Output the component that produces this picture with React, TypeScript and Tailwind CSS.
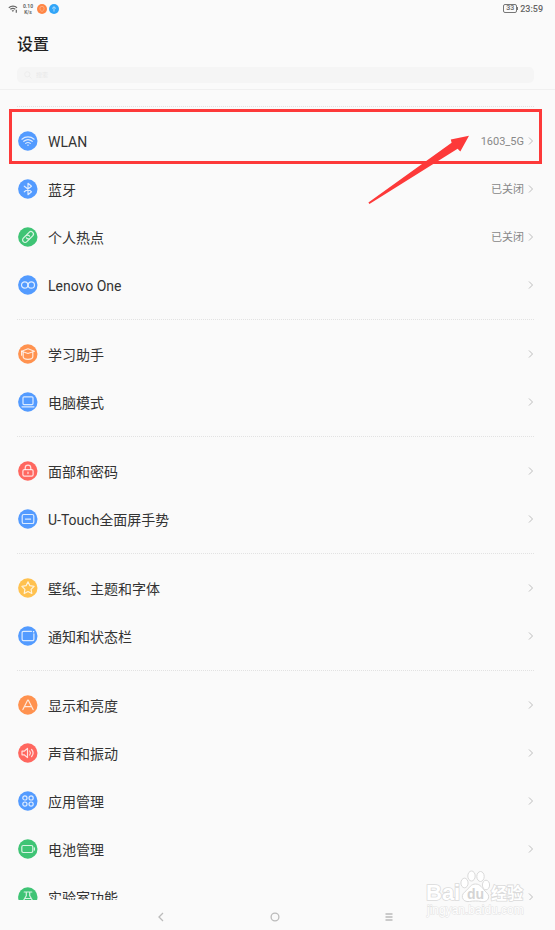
import type { ReactNode } from 'react'

type SettingItem = {
  label: string
  color: string
  icon: ReactNode
  value?: string
  highlighted?: boolean
}

const BLUE = '#539bff'
const GREEN = '#3fc475'
const ORANGE = '#ff924f'
const RED = '#ff675f'
const YELLOW = '#ffc14f'

const groups: SettingItem[][] = [
  [
    {
      label: 'WLAN',
      color: BLUE,
      value: '1603_5G',
      highlighted: true,
      icon: (
        <>
          <path d="M3.9 8.2c3.6-3 8.6-3 12.2 0M5.8 10.3c2.5-2 5.9-2 8.4 0M7.7 12.4c1.4-1.1 3.2-1.1 4.6 0" />
          <path d="M8.9 13.7h2.2L10 15z" fill="#fff" stroke="none" />
        </>
      ),
    },
    {
      label: '蓝牙',
      color: BLUE,
      value: '已关闭',
      icon: <path d="m6.3 7.2 7.2 5.6-3.5 2.9V4.3l3.5 2.9-7.2 5.6" />,
    },
    {
      label: '个人热点',
      color: GREEN,
      value: '已关闭',
      icon: (
        <g transform="rotate(-45 10 10)">
          <path d="M9.2 12.5H5.9a2.5 2.5 0 0 1 0-5h3.4a2.5 2.5 0 0 1 2.4 3" />
          <path d="M10.8 7.5h3.3a2.5 2.5 0 0 1 0 5h-3.4a2.5 2.5 0 0 1-2.4-3" />
        </g>
      ),
    },
    {
      label: 'Lenovo One',
      color: BLUE,
      icon: (
        <>
          <circle cx="6.7" cy="10" r="3.2" />
          <circle cx="13.3" cy="10" r="3.2" />
        </>
      ),
    },
  ],
  [
    {
      label: '学习助手',
      color: ORANGE,
      icon: (
        <>
          <path d="m3.6 7.2 6.4-2.4 6.4 2.4L10 9.5z" />
          <path d="M5.2 8.2v4.6c0 1.4 2.2 2.5 4.8 2.5s4.8-1.1 4.8-2.5V8.2M3.6 7.2v4" />
        </>
      ),
    },
    {
      label: '电脑模式',
      color: BLUE,
      icon: (
        <>
          <rect x="5" y="4.8" width="10" height="7.8" rx="1" />
          <path d="M4 14.8h12" />
        </>
      ),
    },
  ],
  [
    {
      label: '面部和密码',
      color: RED,
      icon: (
        <>
          <rect x="4.9" y="8.6" width="10.2" height="6.6" rx="1.4" />
          <path d="M7.2 8.5V7a2.8 2.8 0 0 1 5.6 0v1.5M10 11.2v1.4" />
        </>
      ),
    },
    {
      label: 'U-Touch全面屏手势',
      color: BLUE,
      icon: (
        <>
          <rect x="4.2" y="5.5" width="11.6" height="9" rx="1.6" />
          <path d="M7.4 10.1h5.2" />
        </>
      ),
    },
  ],
  [
    {
      label: '壁纸、主题和字体',
      color: YELLOW,
      icon: <path d="m10 3.8 1.9 3.9 4.2.6-3 3 .7 4.2-3.8-2-3.8 2 .7-4.2-3-3 4.2-.6z" />,
    },
    {
      label: '通知和状态栏',
      color: BLUE,
      icon: (
        <>
          <path d="M13.4 5.4H5.4c-.8 0-1.3.5-1.3 1.3v6.6c0 .8.5 1.3 1.3 1.3h9.2c.8 0 1.3-.5 1.3-1.3V7.8" />
          <circle cx="15.6" cy="5.7" r=".8" fill="#fff" stroke="none" />
        </>
      ),
    },
  ],
  [
    {
      label: '显示和亮度',
      color: ORANGE,
      icon: <path d="m4.9 14.6 4.7-9.4h.8l4.7 9.4M6.8 11.7h6.4" />,
    },
    {
      label: '声音和振动',
      color: RED,
      icon: (
        <>
          <path d="M4 8.2h2.2l3.3-2.8v9.2l-3.3-2.8H4z" />
          <path d="M11.7 8c.9 1.2.9 2.8 0 4M13.6 6.5c1.8 2.1 1.8 4.9 0 7" />
        </>
      ),
    },
    {
      label: '应用管理',
      color: BLUE,
      icon: (
        <>
          <circle cx="6.9" cy="6.9" r="2.1" />
          <circle cx="13.1" cy="6.9" r="2.1" />
          <circle cx="6.9" cy="13.1" r="2.1" />
          <circle cx="13.1" cy="13.1" r="2.1" />
        </>
      ),
    },
    {
      label: '电池管理',
      color: GREEN,
      icon: (
        <>
          <rect x="3.8" y="6.5" width="11" height="7" rx="1.4" />
          <path d="M16.4 8.9v2.2" />
        </>
      ),
    },
    {
      label: '实验室功能',
      color: GREEN,
      icon: <path d="M6.2 5h7.6M8.3 5v3.8l-3.2 5.4c-.3.6 0 1.2.8 1.2h8.2c.8 0 1.1-.6.8-1.2l-3.2-5.4V5M7 11.5h6" />,
    },
  ],
]

function StatusBar() {
  return (
    <div className="flex h-4 shrink-0 items-center pt-px pr-3 pl-2 text-[#666]">
      <svg viewBox="0 0 10 8" className="h-2 w-2.5" fill="none" stroke="currentColor">
        <path d="M.8 2.7c2.4-2 6-2 8.2 0M2.3 4.3c1.6-1.2 3.6-1.2 5 0" strokeWidth="1.2" />
        <path d="M3.6 5.3h2.6L4.9 7z" fill="currentColor" stroke="none" />
        <path d="M8.3 4.7v3" strokeWidth="1.2" />
      </svg>
      <div className="ml-1 w-3 text-center text-[5px] leading-[6px] font-bold">
        <p>0.10</p>
        <p>K/s</p>
      </div>
      <svg viewBox="0 0 10 10" className="ml-[3px] size-2.5">
        <circle cx="5" cy="5" r="5" fill="#ff8645" />
        <path d="M5 7.7C3.8 6.5 2.9 5.6 2.9 4.4a2.1 2.1 0 0 1 4.2 0C7.1 5.6 6.2 6.5 5 7.7z" fill="none" stroke="#ffb68f" strokeWidth=".8" />
      </svg>
      <svg viewBox="0 0 10 10" className="ml-0.5 size-2.5">
        <circle cx="5" cy="5" r="5" fill="#31a5f8" />
        <path d="M5 7.6V2.9M3 4.6l2-1.9 2 1.9" fill="none" stroke="#b5e1ff" strokeWidth=".9" />
      </svg>
      <div className="ml-auto flex items-center gap-0.5">
        <div className="flex items-center">
          <span className="flex h-[9px] w-3.5 items-center justify-center rounded-[2px] border border-[#777] text-[7px] leading-none font-medium">
            33
          </span>
          <span className="h-[3px] w-px bg-[#777]" />
        </div>
        <time className="pt-px text-[9px] leading-none font-medium">23:59</time>
      </div>
    </div>
  )
}

function Chevron() {
  return (
    <svg viewBox="0 0 6 10" className="h-2.5 w-1.5 shrink-0" fill="none" stroke="#bdbdbd" strokeWidth="1">
      <path d="M1 1.5 4.5 5 1 8.5" />
    </svg>
  )
}

function SettingRow({ item }: { item: SettingItem }) {
  return (
    <li className="relative">
      <a href="#" className="flex h-12 items-center pl-px text-[#333]">
        <svg viewBox="0 0 20 20" className="size-5 shrink-0" aria-hidden="true">
          <circle cx="9.8" cy="10" r="9.7" fill={item.color} />
          <g fill="none" stroke="#fff" strokeOpacity=".8" strokeWidth="1.2" strokeLinejoin="round" strokeLinecap="round">
            {item.icon}
          </g>
        </svg>
        <span className="ml-2.5 flex-1 pt-0.5 text-[14px] leading-5">{item.label}</span>
        {item.value && <span className="mr-1 pt-0.5 text-[11px] leading-4 text-[#888]">{item.value}</span>}
        <Chevron />
      </a>

      {/* Red call-out around the row, with an arrow pointing at its value */}
      {item.highlighted && (
        <>
          <div className="pointer-events-none absolute -inset-x-2 -top-2 bottom-px border-3 border-[#fd3939]" />
          <svg
            viewBox="0 0 102 70"
            className="pointer-events-none absolute top-[18px] right-16 z-10 h-[70px] w-[102px]"
            aria-hidden="true"
          >
            <path d="M.4 67.6 83.6 7.8 82.8 4.6 101 .8 92.3 16.6 89.6 13.8 1.4 69z" fill="#fd3939" />
          </svg>
        </>
      )}
    </li>
  )
}

function Watermark() {
  return (
    <svg
      viewBox="0 0 104 50"
      className="pointer-events-none absolute right-[26px] bottom-3 h-[50px] w-26"
      fill="#fff"
      stroke="#dadada"
      strokeWidth="1"
    >
      <text x="1" y="32" fontFamily="Liberation Sans, sans-serif" fontSize="22" fontWeight="700" strokeWidth="1.6" paintOrder="stroke">
        Bai
      </text>
      <ellipse cx="39.5" cy="15" rx="3.6" ry="4.8" />
      <ellipse cx="46.5" cy="8" rx="3.7" ry="5" />
      <ellipse cx="55.5" cy="8.5" rx="3.7" ry="5" />
      <ellipse cx="61" cy="17" rx="3.6" ry="4.8" />
      <path d="M50.5 16c5 0 6.5 4 9.5 7 3 2.8 4.2 4.5 3.5 7-.9 3.2-4 4-7 3.5-4-.7-8-.7-12 0-3.4.5-6.5-.8-7.1-4-.6-3 1.2-4.6 4-7 3.2-3 4.6-6.5 9.1-6.5z" />
      <text x="42" y="31" fontFamily="Liberation Sans, sans-serif" fontSize="14" fontWeight="700" fill="#d4d4d4" stroke="none">
        du
      </text>
      <text x="66" y="31" fontFamily="Noto Sans CJK SC, sans-serif" fontSize="16" fontWeight="700" strokeWidth="1.6" paintOrder="stroke">
        经验
      </text>
      <text x="2" y="46" fontFamily="Liberation Sans, sans-serif" fontSize="12" stroke="#e2e2e2" paintOrder="stroke">
        jingyan.baidu.com
      </text>
    </svg>
  )
}

export default function App() {
  return (
    <div className="relative flex h-screen flex-col overflow-hidden bg-[#fafafa] font-[Roboto,'Noto_Sans_CJK_SC',sans-serif]">
      <StatusBar />

      {/* Title and search */}
      <header className="shrink-0 border-b border-[#f0f0f0] pt-[17px] pr-[21px] pb-1.5 pl-[17px]">
        <h1 className="text-[16px] leading-6 font-medium text-[#222]">设置</h1>
        <label className="mt-2.5 flex h-4 items-center gap-1 rounded-[5px] bg-[#f5f5f5] pl-[7px]">
          <svg viewBox="0 0 8 8" className="size-2" fill="none" stroke="#ededed">
            <circle cx="3.3" cy="3.3" r="2.6" />
            <path d="m5.3 5.3 2.2 2.2" />
          </svg>
          <input
            type="search"
            aria-label="搜索"
            placeholder="搜索"
            className="min-w-0 flex-1 bg-transparent text-[6px] leading-3 outline-none placeholder:text-[#e8e8e8]"
          />
        </label>
      </header>

      {/* Settings list */}
      <main className="min-h-0 flex-1 overflow-hidden pt-4 pr-[21px] pl-[17px]">
        {groups.map((items) => (
          <ul key={items[0].label} className="border-t border-dotted border-[#e2e2e2] py-2.5">
            {items.map((item) => (
              <SettingRow key={item.label} item={item} />
            ))}
          </ul>
        ))}
      </main>

      {/* System navigation */}
      <nav className="grid h-[30px] shrink-0 grid-cols-3 pt-1 pr-[109px] pl-[104px] text-[#bbb]">
        <button type="button" aria-label="返回" className="flex items-center justify-center">
          <svg viewBox="0 0 10 10" className="size-2.5" fill="none" stroke="currentColor" strokeWidth="1.3">
            <path d="M7 1 3 5l4 4" />
          </svg>
        </button>
        <button type="button" aria-label="主页" className="flex items-center justify-center">
          <svg viewBox="0 0 10 10" className="size-2.5" fill="none" stroke="currentColor" strokeWidth="1.3">
            <circle cx="5" cy="5" r="3.9" />
          </svg>
        </button>
        <button type="button" aria-label="菜单" className="flex items-center justify-center">
          <svg viewBox="0 0 10 10" className="size-2.5" fill="none" stroke="currentColor" strokeWidth="1.3">
            <path d="M1.5 2h7M1.5 5h7M1.5 8h7" />
          </svg>
        </button>
      </nav>

      <Watermark />
    </div>
  )
}
